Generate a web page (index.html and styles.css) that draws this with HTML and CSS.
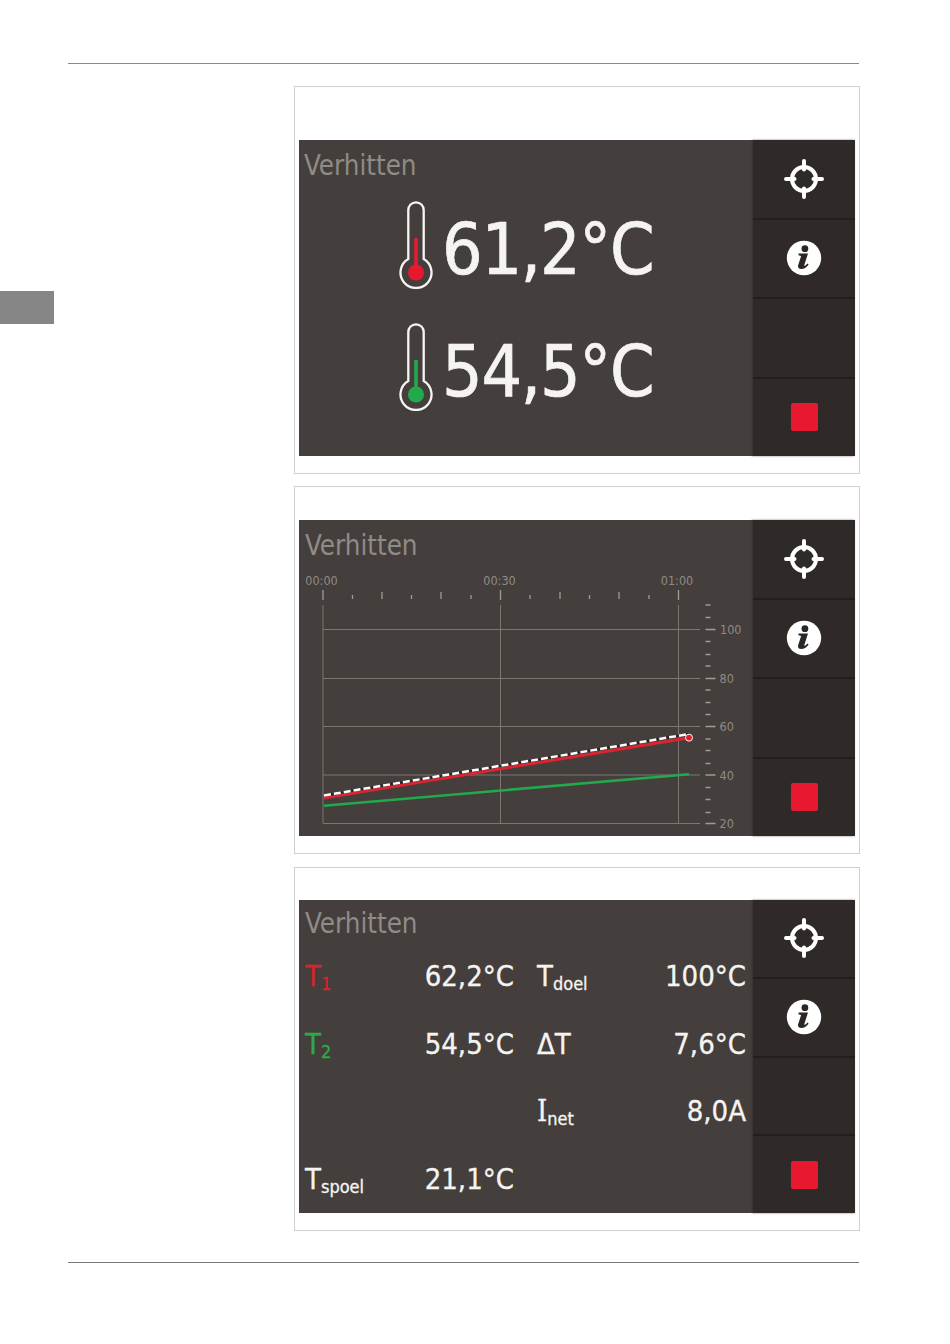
FILE: index.html
```html
<!DOCTYPE html>
<html lang="nl">
<head>
  <meta charset="UTF-8" />
  <title>Verhitten</title>
  <link rel="stylesheet" href="styles.css">
</head>
<body>
  <svg class="icon-defs" aria-hidden="true">
    <symbol id="icon-target" viewBox="0 0 40 40">
      <circle cx="20" cy="20" r="12" fill="none" stroke="#fff" stroke-width="4" />
      <path d="M20 2V10.500M20 29.500V38M2 20H10.500M29.500 20H38" stroke="#fff" stroke-width="4" stroke-linecap="round" />
    </symbol>
    <symbol id="icon-info" viewBox="0 0 40 40">
      <circle cx="20" cy="20" r="17.200" fill="#fff" />
      <circle cx="20.900" cy="10.700" r="3.400" fill="#2b2725" />
      <path d="M14.500 15.500h9.500l-3.600 11.300c-.3 1 .4 1.200 1 .7l2.200-1.900 1 1.100c-2.200 2.700-4.500 4.300-7.300 4.300-2.700 0-3.800-1.600-3.100-4l2.700-8.200c.3-1-.3-1.300-2.400-1.300z" fill="#2b2725" />
    </symbol>
    <symbol id="icon-thermo" viewBox="0 0 34 88">
      <path d="M9.300 58V9a7.700 7.700 0 0 1 15.400 0V58A15.500 15.500 0 1 1 9.300 58Z" fill="none" stroke="#f7f5f2" stroke-width="2.300" />
    </symbol>
  </svg>

  <div class="rule"></div>

  <div class="content">
    <div class="side">
      <div class="side-tab"></div>
    </div>

    <div class="figures">
      <!-- temperatures -->
      <div class="panel panel-temps">
        <div class="screen">
          <div class="main">
            <div class="title title-temps">Verhitten</div>
            <div class="temps">
              <div class="temp-row">
                <svg class="thermo thermo-red" width="34" height="88" viewBox="0 0 34 88">
                  <use href="#icon-thermo" />
                  <rect x="15.200" y="37" width="3.600" height="34" />
                  <circle cx="17" cy="71.500" r="8" />
                </svg>
                <span class="temp-value">61,2°C</span>
              </div>
              <div class="temp-row">
                <svg class="thermo thermo-green" width="34" height="88" viewBox="0 0 34 88">
                  <use href="#icon-thermo" />
                  <rect x="15.200" y="37" width="3.600" height="34" />
                  <circle cx="17" cy="71.500" r="8" />
                </svg>
                <span class="temp-value">54,5°C</span>
              </div>
            </div>
          </div>
          <div class="buttons">
            <div class="btn"><svg width="40" height="40"><use href="#icon-target" /></svg></div>
            <div class="btn"><svg width="40" height="40"><use href="#icon-info" /></svg></div>
            <div class="btn"></div>
            <div class="btn"><div class="stop"></div></div>
          </div>
        </div>
      </div>

      <!-- graph -->
      <div class="panel">
        <div class="screen">
          <div class="main">
            <div class="title">Verhitten</div>
            <svg class="chart" width="453" height="274" viewBox="0 42 453 274">
              <text class="chart-label" x="22.500" y="65" text-anchor="middle">00:00</text>
              <text class="chart-label" x="200.500" y="65" text-anchor="middle">00:30</text>
              <text class="chart-label" x="378" y="65" text-anchor="middle">01:00</text>

              <path class="tick" d="M24 70v10M201.500 70v10M379.500 70v10M83 72v7M142 72v7M261 72v7M320 72v7M53.500 75v4M112.500 75v4M172 75v4M231 75v4M290.500 75v4M350 75v4" />

              <path class="grid" d="M24 85V303M201.500 85V303M379.500 85V303" />
              <path class="grid" d="M24 109.500H401M24 158.500H401M24 206.500H401M24 255H401M24 303.500H401" />

              <path class="tick" d="M406.500 109.500h10M406.500 158.500h10M406.500 206.500h10M406.500 255h10M406.500 303.500h10" />
              <path class="tick" d="M406.500 85h5M406.500 97.500h5M406.500 121.500h5M406.500 134.500h5M406.500 146h5M406.500 170h5M406.500 182.500h5M406.500 194.500h5M406.500 219h5M406.500 230.500h5M406.500 243.500h5M406.500 267.500h5M406.500 279.500h5M406.500 292.500h5" />

              <text class="chart-label" x="421" y="113.500">100</text>
              <text class="chart-label" x="420.500" y="162.500">80</text>
              <text class="chart-label" x="420.500" y="211">60</text>
              <text class="chart-label" x="420.500" y="259.500">40</text>
              <text class="chart-label" x="420.500" y="308">20</text>

              <line class="line-green" x1="25" y1="285.700" x2="390" y2="254.300" />
              <line class="line-red" x1="25" y1="278" x2="390" y2="217.700" />
              <line class="line-shade" x1="25" y1="275.500" x2="390" y2="214" />
              <line class="line-target" x1="25" y1="275.500" x2="390" y2="214" />
              <circle class="chart-dot" cx="390" cy="217.700" r="3.500" />
            </svg>
          </div>
          <div class="buttons">
            <div class="btn"><svg width="40" height="40"><use href="#icon-target" /></svg></div>
            <div class="btn"><svg width="40" height="40"><use href="#icon-info" /></svg></div>
            <div class="btn"></div>
            <div class="btn"><div class="stop"></div></div>
          </div>
        </div>
      </div>

      <!-- readings -->
      <div class="panel panel-readings">
        <div class="screen screen-short">
          <div class="main">
            <div class="title title-readings">Verhitten</div>
            <div class="readings">
              <div class="reading"><span class="red">T<sub>1</sub></span><span>62,2°C</span></div>
              <div class="reading"><span>T<sub>doel</sub></span><span>100°C</span></div>
              <div class="reading"><span class="green">T<sub>2</sub></span><span>54,5°C</span></div>
              <div class="reading"><span>ΔT</span><span>7,6°C</span></div>
              <div class="reading"></div>
              <div class="reading"><span><span class="serif-i">I</span><sub>net</sub></span><span>8,0A</span></div>
              <div class="reading"><span>T<sub>spoel</sub></span><span>21,1°C</span></div>
              <div class="reading"></div>
            </div>
          </div>
          <div class="buttons">
            <div class="btn"><svg width="40" height="40"><use href="#icon-target" /></svg></div>
            <div class="btn"><svg width="40" height="40"><use href="#icon-info" /></svg></div>
            <div class="btn"></div>
            <div class="btn"><div class="stop"></div></div>
          </div>
        </div>
      </div>
    </div>
  </div>

  <div class="rule rule-bottom"></div>
</body>
</html>
```

FILE: styles.css
```css
body {
  margin: 0;
  background: #fff;
  font-family: "DejaVu Sans Condensed", "DejaVu Sans", sans-serif;
  font-stretch: condensed;
  color: #f6f4f1;
}
.icon-defs {
  display: none;
}
.rule {
  height: 1px;
  width: 791px;
  margin: 63px 0 0 68px;
  background: #8a8a8a;
}
.rule-bottom {
  margin-top: 31px;
  background: #777;
}
.content {
  display: flex;
  margin-top: 22px;
}
.side {
  width: 294px;
}
.side-tab {
  width: 54px;
  height: 33px;
  margin-top: 205px;
  background: #868686;
}
.figures {
  display: flex;
  flex-direction: column;
  gap: 12px;
  width: 566px;
}
.panel {
  border: 1px solid #cfcfcf;
  padding: 33px 4px 17px;
}
.panel-temps {
  padding-top: 53px;
}
.panel-readings {
  margin-top: 1px;
  padding-top: 32px;
}
.screen {
  display: flex;
  height: 316px;
  background: #443f3d;
}
.screen-short {
  height: 313px;
}
.main {
  flex: 1;
  min-width: 0;
}
.title {
  margin: 9px 0 0 6px;
  font-size: 27.5px;
  line-height: 32px;
  color: #908b87;
}
.title-temps {
  margin-left: 5px;
}
.title-readings {
  margin-top: 7px;
}

/* side buttons */
.buttons {
  display: flex;
  flex-direction: column;
  width: 102px;
  background: #2f2a28;
  box-shadow: -1px 0 2px rgba(47, 42, 40, 0.6);
}
.btn {
  flex: 1;
  display: flex;
  align-items: center;
  justify-content: center;
  border-top: 2px solid #231f1e;
}
.btn:first-child {
  border-top: none;
}
.stop {
  width: 27px;
  height: 28px;
  border-radius: 2px;
  background: #e8192f;
}

/* temperatures */
.temps {
  display: flex;
  flex-direction: column;
  gap: 33.500px;
  margin-top: 20px;
  padding-left: 100px;
}
.temp-row {
  display: flex;
  gap: 9px;
  height: 88px;
}
.temp-value {
  padding-top: 5px;
  font-size: 71px;
  line-height: 88px;
  letter-spacing: -1.200px;
  white-space: nowrap;
  -webkit-text-stroke: 0.7px #f6f4f1;
}
.thermo-red rect,
.thermo-red circle {
  fill: #e8192f;
}
.thermo-green rect,
.thermo-green circle {
  fill: #22a94b;
}

/* graph */
.chart {
  display: block;
  margin-top: 1px;
}
.chart-label {
  font-size: 12.500px;
  fill: #8f8a86;
}
.grid {
  fill: none;
  stroke: #7c7773;
  stroke-width: 1;
}
.tick {
  fill: none;
  stroke: #a09b97;
  stroke-width: 1.300;
}
.line-green {
  stroke: #22a94b;
  stroke-width: 2.500;
}
.line-red {
  stroke: #dc2430;
  stroke-width: 3;
}
.line-shade {
  stroke: #2a2628;
  stroke-width: 2.500;
}
.line-target {
  stroke: #fff;
  stroke-width: 2.500;
  stroke-dasharray: 7 3;
}
.chart-dot {
  fill: #e8192f;
  stroke: #f6f4f1;
  stroke-width: 1;
}

/* readings */
.readings {
  display: grid;
  grid-template-columns: repeat(2, 209px);
  grid-auto-rows: 67.500px;
  column-gap: 23px;
  margin-top: 4px;
  padding-left: 6px;
  font-size: 29px;
  line-height: 67.500px;
  -webkit-text-stroke: 0.3px currentColor;
}
.reading {
  display: flex;
  justify-content: space-between;
  align-items: baseline;
}
.reading sub {
  font-size: 18px;
  line-height: 0;
  vertical-align: -4px;
}
.serif-i {
  font-family: "DejaVu Serif Condensed", "DejaVu Serif", serif;
}
.red {
  color: #d8232f;
}
.green {
  color: #2fa84a;
}
```
